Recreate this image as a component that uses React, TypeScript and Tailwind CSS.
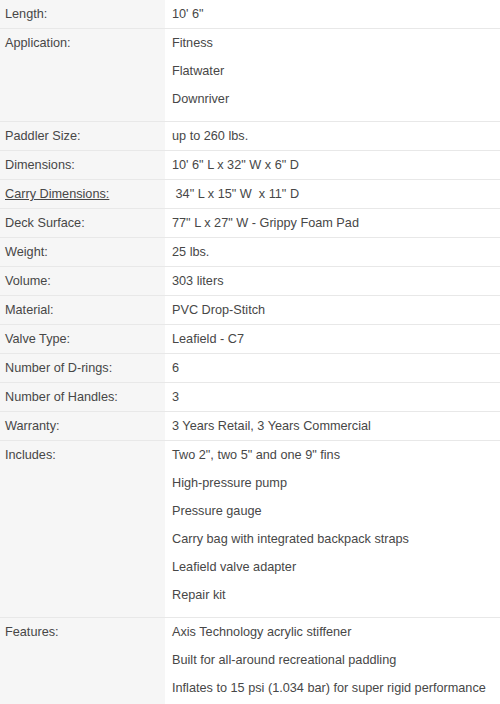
import React from "react";

type Row = { label: string; values: string[]; underline?: boolean };

const rows: Row[] = [
  { label: "Length:", values: ["10' 6\""] },
  { label: "Application:", values: ["Fitness", "Flatwater", "Downriver"] },
  { label: "Paddler Size:", values: ["up to 260 lbs."] },
  { label: "Dimensions:", values: ["10' 6\" L x 32\" W x 6\" D"] },
  { label: "Carry Dimensions:", values: [" 34\" L x 15\" W  x 11\" D"], underline: true },
  { label: "Deck Surface:", values: ["77\" L x 27\" W - Grippy Foam Pad"] },
  { label: "Weight:", values: ["25 lbs."] },
  { label: "Volume:", values: ["303 liters"] },
  { label: "Material:", values: ["PVC Drop-Stitch"] },
  { label: "Valve Type:", values: ["Leafield - C7"] },
  { label: "Number of D-rings:", values: ["6"] },
  { label: "Number of Handles:", values: ["3"] },
  { label: "Warranty:", values: ["3 Years Retail, 3 Years Commercial"] },
  {
    label: "Includes:",
    values: [
      "Two 2\", two 5\" and one 9\" fins",
      "High-pressure pump",
      "Pressure gauge",
      "Carry bag with integrated backpack straps",
      "Leafield valve adapter",
      "Repair kit",
    ],
  },
  {
    label: "Features:",
    values: [
      "Axis Technology acrylic stiffener",
      "Built for all-around recreational paddling",
      "Inflates to 15 psi (1.034 bar) for super rigid performance",
    ],
  },
];

export default function App() {
  return (
    <div
      className="w-[500px] h-[704px] overflow-hidden bg-white text-[#474747] text-[12.7px]"
      style={{ fontFamily: '"Liberation Sans", Arial, sans-serif' }}
    >
      {rows.map((r, i) => (
        <div key={i} className="flex border-b border-[#e8e8e8]">
          <div className={`w-[165px] shrink-0 bg-[#f6f6f6] pl-[5px] ${r.values.length > 1 ? "pb-2" : ""}`}>
            <div className="h-[28px] leading-[28px]">
              <span className={r.underline ? "underline" : ""}>{r.label}</span>
            </div>
          </div>
          <div className={`flex-1 pl-[7px] ${r.values.length > 1 ? "pb-2" : ""}`}>
            {r.values.map((v, j) => (
              <div key={j} className="h-[28px] leading-[28px] whitespace-pre">
                {v}
              </div>
            ))}
          </div>
        </div>
      ))}
    </div>
  );
}
